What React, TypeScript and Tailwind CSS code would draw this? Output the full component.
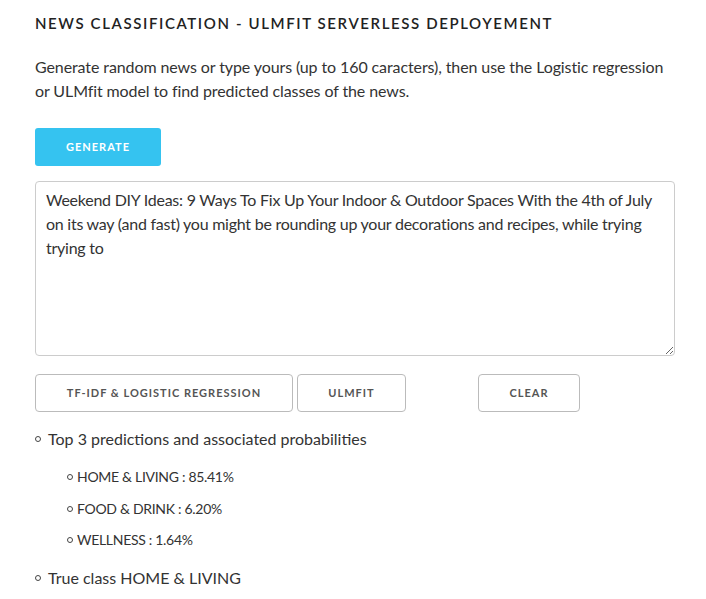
const font = { fontFamily: 'Lato, "Open Sans", sans-serif' };

const Bullet = ({ children, inner }: { children: React.ReactNode; inner?: boolean }) => (
  <li className="flex items-center">
    <span
      className={`inline-block rounded-full border border-[#444] ${inner ? 'w-[6px] h-[6px] mr-[4px]' : 'w-[6px] h-[6px] mr-[7px]'}`}
    />
    <span>{children}</span>
  </li>
);

export default function App() {
  return (
    <div className="bg-white w-[706px] h-[599px] overflow-hidden text-[#333]" style={font}>
      <div className="pl-[35px] pr-[31px]">
        <h1 className="pt-[13px] text-[15px] font-semibold tracking-[1.6px] text-[#222] leading-[20px]">
          NEWS CLASSIFICATION - ULMFIT SERVERLESS DEPLOYEMENT
        </h1>
        <p className="mt-[22px] text-[16px] leading-[24px] tracking-[-0.1px] text-[#333]">
          Generate random news or type yours (up to 160 caracters), then use the Logistic regression or
          ULMfit model to find predicted classes of the news.
        </p>

        <button className="mt-[25px] w-[126px] h-[38px] rounded-[3px] bg-[#35c3f0] text-white text-[11px] font-bold tracking-[1px]">
          GENERATE
        </button>

        <textarea
          readOnly
          className="block mt-[15px] w-[640px] h-[175px] border border-[#ccc] rounded-[4px] px-[10px] py-[6px] text-[16px] leading-[24px] tracking-[-0.25px] text-[#333] outline-none"
          style={font}
          defaultValue="Weekend DIY Ideas: 9 Ways To Fix Up Your Indoor & Outdoor Spaces With the 4th of July on its way (and fast) you might be rounding up your decorations and recipes, while trying trying to"
        />

        <div className="flex mt-[18px] h-[38px]">
          <button className="w-[258px] border border-[#bbb] rounded-[4px] text-[11px] font-bold tracking-[1px] text-[#555]">
            TF-IDF &amp; LOGISTIC REGRESSION
          </button>
          <button className="ml-[4px] w-[109px] border border-[#bbb] rounded-[4px] text-[11px] font-bold tracking-[1px] text-[#555]">
            ULMFIT
          </button>
          <button className="ml-[72px] w-[102px] border border-[#bbb] rounded-[4px] text-[11px] font-bold tracking-[1px] text-[#555]">
            CLEAR
          </button>
        </div>

        <ul className="mt-[16px] text-[16px] leading-[22px]">
          <Bullet>Top 3 predictions and associated probabilities</Bullet>
        </ul>
        <ul className="mt-[17px] ml-[32px] text-[14px] leading-[20px] tracking-[-0.3px] flex flex-col gap-[11.5px]">
          <Bullet inner>HOME &amp; LIVING : 85.41%</Bullet>
          <Bullet inner>FOOD &amp; DRINK : 6.20%</Bullet>
          <Bullet inner>WELLNESS : 1.64%</Bullet>
        </ul>
        <ul className="mt-[17px] text-[16px] leading-[22px]">
          <Bullet>True class HOME &amp; LIVING</Bullet>
        </ul>
      </div>
    </div>
  );
}
